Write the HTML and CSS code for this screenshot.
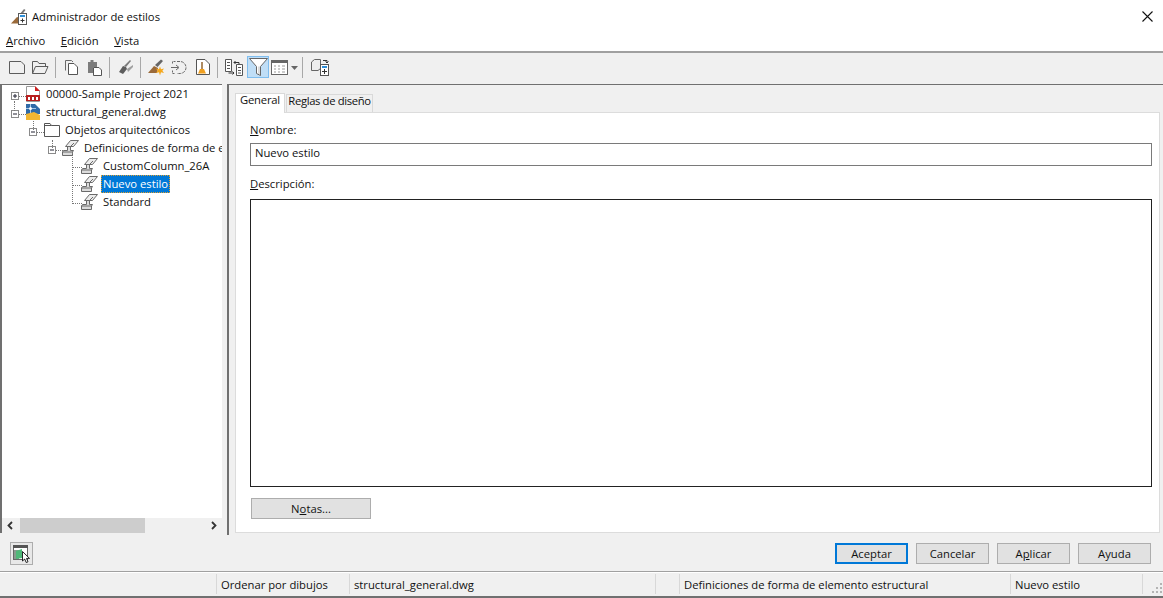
FILE: index.html
```html
<!DOCTYPE html>
<html lang="es">
<head>
<meta charset="utf-8">
<title>Administrador de estilos</title>
<link rel="stylesheet" href="styles.css">
</head>
<body>
<div class="window">
  <header class="titlebar">
    <svg class="title-icon" width="16" height="17" viewBox="0 0 16 17"><path d="M0 15.5 L6 9 L9 10 L7 15.5 Z" fill="#9a6a3a"/><path d="M8 7 L13 1 L14.5 2 L10 8 Z" fill="#7a7a7a"/><rect x="7.5" y="5.5" width="8" height="11" fill="#fff" stroke="#5a5a5a"/><rect x="9" y="7" width="5" height="2" fill="#2f8fd8"/><path d="M11.5 10.5 V14.5 M9.5 12.5 H13.5" stroke="#333" fill="none"/></svg>
    <span class="title-text">Administrador de estilos</span>
    <svg class="close" width="11" height="11" viewBox="0 0 11 11"><path d="M0.5 0.5 L10.5 10.5 M10.5 0.5 L0.5 10.5" stroke="#111" stroke-width="1.1" fill="none"/></svg>
  </header>
  <nav class="menubar">
    <span class="menu-item"><u>A</u>rchivo</span>
    <span class="menu-item"><u>E</u>dición</span>
    <span class="menu-item"><u>V</u>ista</span>
  </nav>
  <div class="toolbar">
    <span class="tool"><svg width="17" height="15" viewBox="0 0 17 15"><path d="M0.5 1.5 H12 L15.5 5 V13.5 H0.5 Z" fill="none" stroke="#5c5c5c"/></svg></span>
    <span class="tool"><svg width="17" height="15" viewBox="0 0 17 15"><path d="M0.5 13.5 V1.5 H5.5 L7 3.5 H13.5 V6 M0.5 13.5 L3.5 6.5 H16 L13 13.5 Z" fill="none" stroke="#5c5c5c"/></svg></span>
    <span class="sep"></span>
    <span class="tool"><svg width="15" height="16" viewBox="0 0 15 16"><path d="M1.5 11.5 V1.5 H7.5 L9 3" fill="none" stroke="#6a6a6a"/><path d="M4.5 4.5 H10 L13.5 8 V15.5 H4.5 Z" fill="#fff" stroke="#555"/></svg></span>
    <span class="tool"><svg width="15" height="17" viewBox="0 0 15 17"><path d="M1 3 H10 V8 H6 V14 H1 Z" fill="#7c7c7c"/><rect x="3.5" y="1" width="3" height="3" fill="#7c7c7c"/><path d="M6.5 8.5 H12 L14.5 11 V16.5 H6.5 Z" fill="#fff" stroke="#555"/></svg></span>
    <span class="sep"></span>
    <span class="tool"><svg width="16" height="15" viewBox="0 0 16 15"><path d="M1 12 L5 6 L8 7 L9 9 L5 14 Z" fill="#5d5d5d"/><path d="M6 6 L12 0 L13 1 L8 7 Z" fill="#7a7a7a"/><path d="M9 9 L15 5 L15 7 L10 12 Z" fill="#a0a0a0"/></svg></span>
    <span class="sep"></span>
    <span class="tool"><svg width="17" height="17" viewBox="0 0 17 17"><path d="M0 14 L6 7 L10 9 L9 14 Z" fill="#9a6a3a"/><path d="M7 6 L13 0.5 L15 2 L9.5 8 Z" fill="#666"/><path d="M12 7.5 L13 10.2 L16 9.5 L14.4 11.7 L16 14 L13 13.2 L12 16.5 L11 13.2 L8 14 L9.6 11.7 L8 9.5 L11 10.2 Z" fill="#f5a81c"/></svg></span>
    <span class="tool"><svg width="17" height="15" viewBox="0 0 17 15"><path d="M6 1.5 H9 A6 6 0 0 1 9 13.5 H6" fill="none" stroke="#6a6a6a" stroke-dasharray="3 1"/><path d="M4.5 1.5 H1.5 V4.5 M1.5 10.5 V13.5 H4.5" fill="none" stroke="#6a6a6a" stroke-dasharray="2 1"/><path d="M0 7.5 H7 M5 5 L8 7.5 L5 10" fill="none" stroke="#6a6a6a"/></svg></span>
    <span class="tool"><svg width="14" height="16" viewBox="0 0 14 16"><path d="M0.5 0.5 H9 L13.5 5 V15.5 H0.5 Z" fill="#fff" stroke="#555"/><rect x="5.3" y="3" width="1.4" height="7" fill="#8a5a20"/><path d="M2 14.5 L4 10 H8 L10 14.5 Z" fill="#f0a020"/></svg></span>
    <span class="sep"></span>
    <span class="tool"><svg width="18" height="17" viewBox="0 0 18 17"><path d="M0.5 0.5 H6.5 V12.5 H0.5 Z M2 3.5 H5 M2 6.5 H5 M2 9.5 H5" fill="#fff" stroke="#555"/><path d="M11.5 5.5 H17.5 V16.5 H11.5 Z M13 8.5 H16 M13 11.5 H16 M13 14 H16" fill="#fff" stroke="#555"/><path d="M9 3.5 H14 V5 M9 3.5 L10.5 2 M9 3.5 L10.5 5 M3.5 14 H9 M9 14 L7.5 12.5 M9 14 L7.5 15.5" fill="none" stroke="#333"/></svg></span>
    <span class="tool tool-on"><svg width="19" height="20" viewBox="0 0 19 20"><path d="M0.5 1.5 H18.5 L11.5 9.5 V18.5 L7.5 16.5 V9.5 Z" fill="#fff" stroke="#666"/><path d="M10 9.5 V17" stroke="#bbb" fill="none"/></svg></span>
    <span class="tool tool-drop"><svg width="18" height="15" viewBox="0 0 18 15"><rect x="0.5" y="0.5" width="16" height="14" fill="#fff" stroke="#666"/><rect x="0" y="0" width="17" height="3" fill="#666"/><path d="M3 6 H5 M7 6 H9 M11 6 H14 M3 9 H5 M7 9 H9 M11 9 H14 M3 12 H5 M7 12 H9 M11 12 H14" stroke="#999" fill="none"/></svg><svg class="drop-arrow" width="7" height="4" viewBox="0 0 7 4"><path d="M0 0 H7 L3.5 4 Z" fill="#666"/></svg></span>
    <span class="sep sep-last"></span>
    <span class="tool"><svg width="18" height="18" viewBox="0 0 18 18"><path d="M0.5 4 L3.5 1.5 H9.5 V10.5 L7 12.5 H0.5 Z" fill="#eee" stroke="#666"/><path d="M12 2.5 H16 V5 M16 5 L14.5 3.5 M16 5 L17.5 3.5" fill="none" stroke="#333"/><rect x="9.5" y="6.5" width="8" height="11" fill="#fff" stroke="#555"/><rect x="11" y="8" width="5" height="2" fill="#2f8fd8"/><path d="M13.5 11 V16 M11 13.5 H16" stroke="#333" fill="none"/></svg></span>
  </div>
  <main class="main">
    <aside class="tree-panel">
      <div class="tree">
        <div class="row row-l1">
          <span class="exp"><svg width="8" height="8" viewBox="0 0 8 8"><rect x="0.5" y="0.5" width="7" height="7" fill="#fff" stroke="#8a8a8a"/><path d="M2 4 H6 M4 2 V6" stroke="#223" fill="none"/></svg></span>
          <svg class="icon" width="14" height="16" viewBox="0 0 14 16"><path d="M0.5 0.5 H9 L13.5 5 V15.5 H0.5 Z" fill="#fff" stroke="#999"/><path d="M9 0 L14 5 H9 Z" fill="#d02020"/><rect x="0" y="9" width="14" height="6" fill="#b81f1f"/><rect x="2" y="11" width="2" height="3" fill="#fff"/><rect x="6" y="11" width="2" height="3" fill="#fff"/><rect x="10" y="11" width="2" height="3" fill="#fff"/></svg>
          <span class="label">00000-Sample Project 2021</span>
        </div>
        <div class="row row-l1">
          <span class="exp"><svg width="8" height="8" viewBox="0 0 8 8"><rect x="0.5" y="0.5" width="7" height="7" fill="#fff" stroke="#8a8a8a"/><path d="M2 4 H6" stroke="#223" fill="none"/></svg></span>
          <svg class="icon" width="14" height="16" viewBox="0 0 14 16"><path d="M0 0 H9 L14 5 V10 H0 Z" fill="#2f6aa8"/><path d="M0 10 L8 8 L14 11 V16 H0 Z" fill="#f2b632"/><path d="M4.5 0 V9 M0 4.5 H10" stroke="#a8c8e8" fill="none"/><circle cx="4.5" cy="4.5" r="1.5" fill="#fff"/></svg>
          <span class="label">structural_general.dwg</span>
        </div>
        <div class="row row-l2">
          <span class="exp"><svg width="8" height="8" viewBox="0 0 8 8"><rect x="0.5" y="0.5" width="7" height="7" fill="#fff" stroke="#8a8a8a"/><path d="M2 4 H6" stroke="#223" fill="none"/></svg></span>
          <svg class="icon" width="16" height="14" viewBox="0 0 16 14"><path d="M0.5 13.5 V0.5 H6 L7.5 2.5 H15.5 V13.5 Z M0.5 2.5 H7.5" fill="#fff" stroke="#555"/></svg>
          <span class="label">Objetos arquitectónicos</span>
        </div>
        <div class="row row-l3">
          <span class="exp"><svg width="8" height="8" viewBox="0 0 8 8"><rect x="0.5" y="0.5" width="7" height="7" fill="#fff" stroke="#8a8a8a"/><path d="M2 4 H6" stroke="#223" fill="none"/></svg></span>
          <svg class="icon" width="17" height="16" viewBox="0 0 17 16"><path d="M8.5 0.5 H16.5 L11.5 6.5 H3.5 Z" fill="#ececec" stroke="#6a6a6a"/><path d="M5.5 6.5 V10.5 H1.5 L0.5 12 V15.5 H10.5 V12 L11.5 10.5 H8.5 V6.5 Z" fill="#dcdcdc" stroke="#6a6a6a"/><path d="M0.5 12 H10.5 M8.5 6.5 L12 3" fill="none" stroke="#6a6a6a"/></svg>
          <span class="label">Definiciones de forma de elemento estructural</span>
        </div>
        <div class="row row-l4">
          <svg class="icon" width="17" height="16" viewBox="0 0 17 16"><path d="M8.5 0.5 H16.5 L11.5 6.5 H3.5 Z" fill="#ececec" stroke="#6a6a6a"/><path d="M5.5 6.5 V10.5 H1.5 L0.5 12 V15.5 H10.5 V12 L11.5 10.5 H8.5 V6.5 Z" fill="#dcdcdc" stroke="#6a6a6a"/><path d="M0.5 12 H10.5 M8.5 6.5 L12 3" fill="none" stroke="#6a6a6a"/></svg>
          <span class="label">CustomColumn_26A</span>
        </div>
        <div class="row row-l4">
          <svg class="icon" width="17" height="16" viewBox="0 0 17 16"><path d="M8.5 0.5 H16.5 L11.5 6.5 H3.5 Z" fill="#ececec" stroke="#6a6a6a"/><path d="M5.5 6.5 V10.5 H1.5 L0.5 12 V15.5 H10.5 V12 L11.5 10.5 H8.5 V6.5 Z" fill="#dcdcdc" stroke="#6a6a6a"/><path d="M0.5 12 H10.5 M8.5 6.5 L12 3" fill="none" stroke="#6a6a6a"/></svg>
          <span class="label label-sel">Nuevo estilo</span>
        </div>
        <div class="row row-l4">
          <svg class="icon" width="17" height="16" viewBox="0 0 17 16"><path d="M8.5 0.5 H16.5 L11.5 6.5 H3.5 Z" fill="#ececec" stroke="#6a6a6a"/><path d="M5.5 6.5 V10.5 H1.5 L0.5 12 V15.5 H10.5 V12 L11.5 10.5 H8.5 V6.5 Z" fill="#dcdcdc" stroke="#6a6a6a"/><path d="M0.5 12 H10.5 M8.5 6.5 L12 3" fill="none" stroke="#6a6a6a"/></svg>
          <span class="label">Standard</span>
        </div>
        <span class="conn conn-a"></span>
        <span class="conn conn-b"></span>
        <span class="conn conn-c"></span>
        <span class="conn conn-d"></span>
        <span class="conn conn-e"></span>
        <span class="conn conn-f"></span>
      </div>
      <div class="hscroll">
        <svg class="arrow" width="17" height="15" viewBox="0 0 17 15"><path d="M10 4 L6.5 7.5 L10 11" fill="none" stroke="#333" stroke-width="1.8"/></svg>
        <span class="track"><span class="thumb"></span></span>
        <svg class="arrow" width="17" height="15" viewBox="0 0 17 15"><path d="M7 4 L10.5 7.5 L7 11" fill="none" stroke="#333" stroke-width="1.8"/></svg>
      </div>
    </aside>
    <section class="detail">
      <div class="tabs">
        <span class="tab tab-on">General</span>
        <span class="tab tab-off">Reglas de diseño</span>
      </div>
      <div class="pane">
        <label class="field-label"><u>N</u>ombre:</label>
        <div class="input">Nuevo estilo</div>
        <label class="field-label field-label-2"><u>D</u>escripción:</label>
        <div class="textarea"></div>
        <div class="btn btn-notes">N<u>o</u>tas...</div>
      </div>
    </section>
  </main>
  <div class="actions">
    <span class="mini"><svg width="18" height="18" viewBox="0 0 18 18"><rect x="0.5" y="0.5" width="14" height="14" fill="#fff" stroke="#666"/><rect x="0" y="0" width="15" height="3" fill="#555"/><rect x="1" y="5" width="5" height="9" fill="#8a9a90"/><path d="M3 6 L9 4 V13 L3 14 Z" fill="#4fb878"/><path d="M9.5 6.5 V16 L11.7 14 L13.2 17.5 L15 16.8 L13.5 13.4 L16.5 13.4 Z" fill="#fff" stroke="#111" stroke-width="0.9"/></svg></span>
    <div class="btn btn-default">Aceptar</div>
    <div class="btn">Cancelar</div>
    <div class="btn">A<u>p</u>licar</div>
    <div class="btn">Ayuda</div>
  </div>
  <footer class="status">
    <span class="cell c1"></span>
    <span class="cell c2">Ordenar por dibujos</span>
    <span class="cell c3">structural_general.dwg</span>
    <span class="cell c4"></span>
    <span class="cell c5">Definiciones de forma de elemento estructural</span>
    <span class="cell c6">Nuevo estilo</span>
    <span class="cell c7"><svg width="11" height="11" viewBox="0 0 11 11"><path d="M8 1h2v2H8zM4 5h2v2H4zM8 5h2v2H8zM0 9h2v2H0zM4 9h2v2H4zM8 9h2v2H8z" fill="#b4b4b4"/></svg></span>
  </footer>
</div>
</body>
</html>
```
FILE: styles.css
```css
* { box-sizing: border-box; }
html, body { margin: 0; padding: 0; }
body {
  width: 1163px;
  height: 598px;
  overflow: hidden;
  background: #f0f0f0;
  font-family: "Open Sans", "Noto Sans", sans-serif;
  font-size: 11.25px;
  color: #111;
}
u { text-underline-offset: 1px; }
.window { display: flex; flex-direction: column; height: 598px; }

.titlebar {
  display: flex; align-items: center;
  height: 30px; padding: 3px 10px 0 11px;
  background: #fff;
}
.title-icon { margin-right: 5px; }
.title-text { flex: 1; }

.menubar {
  display: flex; gap: 15.5px;
  height: 21px; padding: 2px 0 0 6px;
  background: #fff;
  line-height: 18px;
}

.toolbar {
  display: flex; align-items: center;
  height: 33px; padding: 0 0 3px 6px;
  border-top: 2px solid #a0a0a0;
  background: #f0f0f0;
}
.tool { display: flex; align-items: center; justify-content: center; width: 23px; height: 22px; }
.tool-on { width: 22px; margin-left: 2px; background: #c0def6; border: 1px solid #7fbdee; }
.tool-drop { width: 29px; gap: 2px; margin-left: 1px; }
.drop-arrow { margin-top: 1px; }
.sep { width: 1px; height: 21px; margin: 0 4px 0 3px; background: #a8a8a8; }
.sep-last { margin-right: 5px; }

.main { flex: 1; display: flex; min-height: 0; }

.tree-panel {
  width: 222px; display: flex; flex-direction: column;
  border-left: 2px solid #707070;
  border-top: 1px solid #707070;
  background: #fff;
  margin-bottom: 2px;
}
.tree { position: relative; flex: 1; overflow: hidden; }
.row { display: flex; align-items: center; height: 18.05px; white-space: nowrap; }
.exp { position: relative; display: flex; flex: none; width: 15px; margin-top: 3px; }
.exp::after { content: ""; position: absolute; left: 8px; top: 4px; width: 7px; border-top: 1px dotted #777; }
.icon { flex: none; margin-right: 5px; }
.row-l1 { padding-left: 9px; }
.row-l2 { padding-left: 27px; }
.row-l3 { padding-left: 46px; }
.row-l4 { padding-left: 79px; }
.row-l2 .icon { margin-right: 4px; }
.row-l3 .exp { width: 14px; }
.row-l3 .icon { margin-right: 4px; }
.row-l4 .icon { margin-right: 3px; }
.label { padding: 0 1px; line-height: 16px; }
.row-l4 .label { padding: 0 2px; }
.row-l4 .label-sel { background: #0078d7; color: #fff; line-height: 18px; outline: 1px dotted #e0a030; outline-offset: -1px; }
.conn { position: absolute; border-left: 1px dotted #777; }
.conn-a { left: 12px; top: 16px; height: 10px; }
.conn-b { left: 31px; top: 36px; height: 9px; }
.conn-c { left: 50px; top: 55px; height: 8px; }
.conn-d { left: 70px; top: 67px; width: 10px; height: 52px; border-bottom: 1px dotted #777; }
.conn-e { left: 70px; top: 82px; width: 10px; border-left: 0; border-top: 1px dotted #777; }
.conn-f { left: 70px; top: 100px; width: 10px; border-left: 0; border-top: 1px dotted #777; }

.hscroll { display: flex; align-items: stretch; height: 15px; background: #f0f0f0; }
.arrow { flex: none; }
.track { flex: 1; }
.thumb { display: block; width: 125px; height: 100%; margin-left: 1px; background: #cdcdcd; }

.detail {
  flex: 1; display: flex; flex-direction: column;
  margin-left: 5px; padding: 7px 3px 2px 6px;
  border-left: 2px solid #707070;
  border-top: 1px solid #707070;
}
.tabs { display: flex; align-items: flex-end; height: 20px; }
.tab {
  height: 18px; margin-left: 1px;
  border: 1px solid #d9d9d9; border-bottom: 0;
  text-align: center; white-space: nowrap;
  line-height: 12px;
}
.tab-off { width: 87px; letter-spacing: -0.35px; }
.tab-on {
  width: 50px; height: 20px; margin: 0 0 -1px;
  background: #fff; position: relative; line-height: 11px;
  letter-spacing: -0.2px;
}
.pane {
  flex: 1; display: flex; flex-direction: column;
  padding: 9px 7px 13px 14px;
  background: #fff;
  border: 1px solid #dcdcdc;
}
.field-label { line-height: 16px; }
.field-label-2 { margin-top: 10px; }
.input {
  height: 23px; margin-top: 5px; padding-left: 4px;
  border: 1px solid #7a7a7a; line-height: 18px;
}
.textarea { flex: 1; margin: 7px 0 11px; border: 1px solid #222; }
.btn {
  width: 73px; height: 21px;
  text-align: center; line-height: 19px;
  background: #e1e1e1; border: 1px solid #adadad;
}
.btn-notes { width: 120px; margin-left: 1px; }
.btn-default { border: 2px solid #0078d7; line-height: 17px; margin-left: auto; }

.actions {
  display: flex; align-items: center; gap: 8px;
  height: 36px; padding: 1px 12px 0 10px;
}
.mini { display: flex; align-items: center; justify-content: center; width: 23px; height: 23px; border: 1px solid #adadad; background: #e8e8e8; }

.status {
  display: flex; height: 27px;
  padding: 2px 0;
  border-top: 1px solid #a0a0a0;
  border-bottom: 2px solid #707070;
  box-shadow: inset 0 1px 0 #fff;
  line-height: 22px;
}
.cell { padding-left: 4px; border-left: 1px solid #d8d8d8; white-space: nowrap; overflow: hidden; }
.c1 { width: 216px; border-left: 0; }
.c2 { width: 133px; }
.c3 { width: 306px; }
.c4 { width: 24px; }
.c5 { width: 331px; }
.c6 { width: 132px; }
.c7 { flex: 1; padding: 8px 0 0 9px; line-height: 0; }
```
